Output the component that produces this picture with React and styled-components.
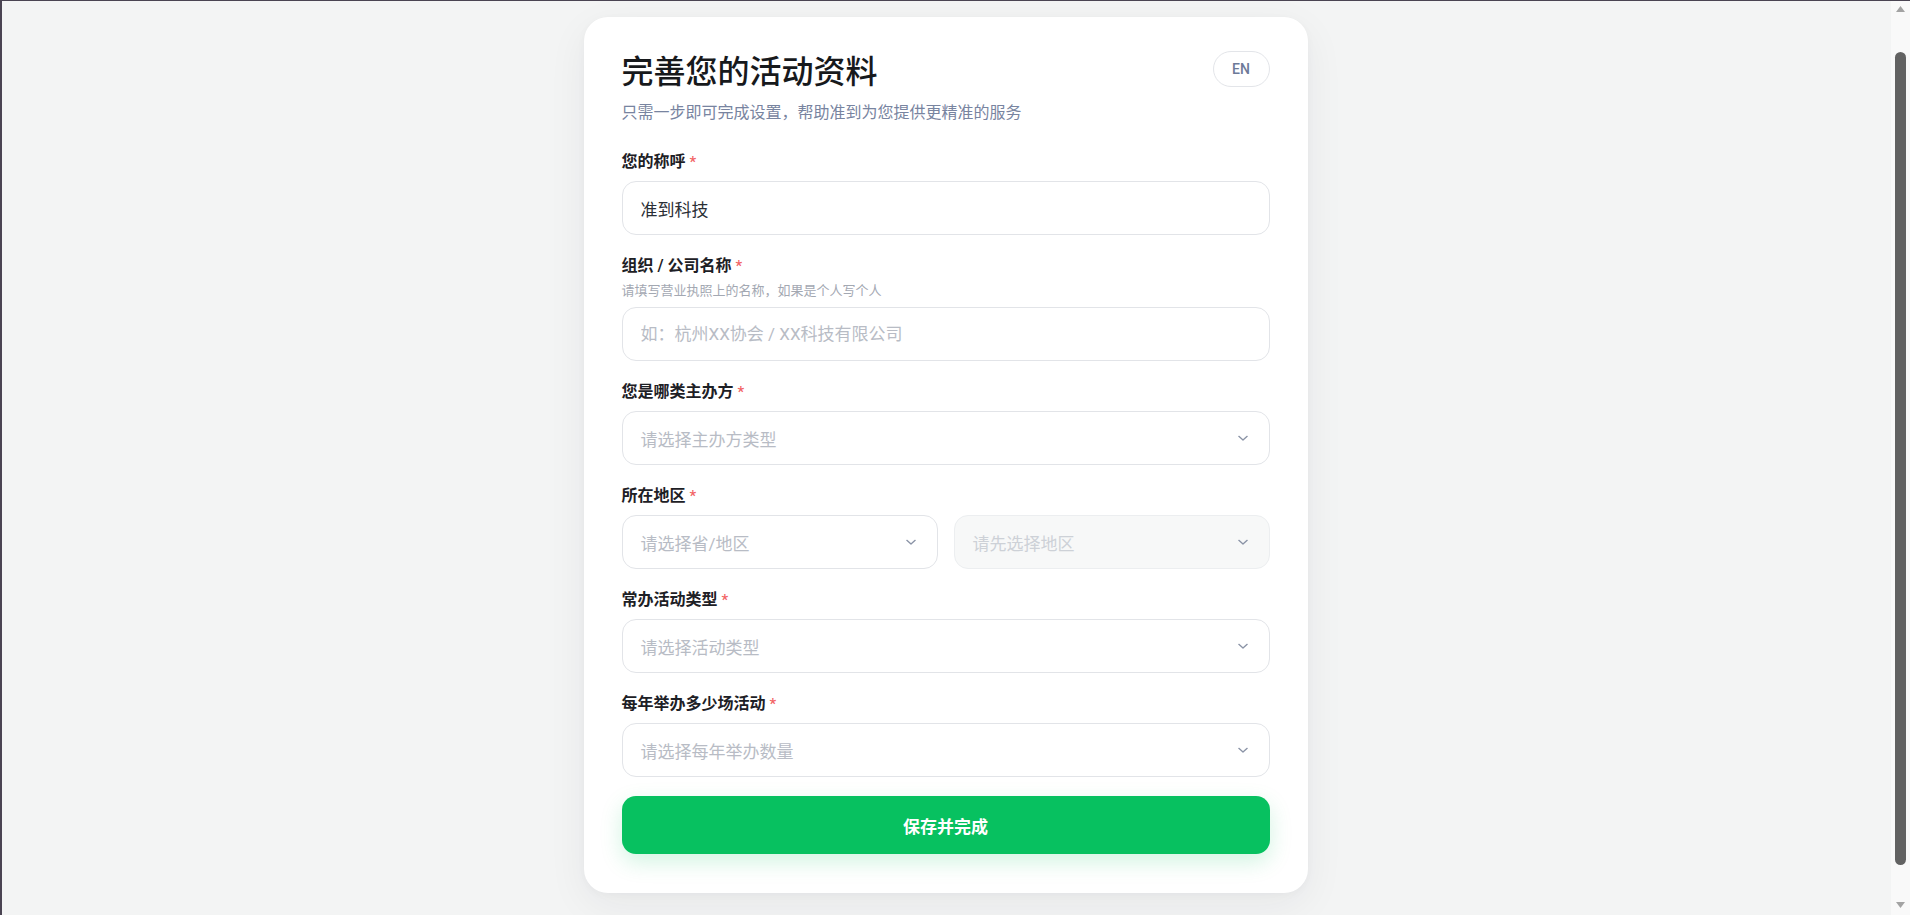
import React, { useLayoutEffect } from "react";
import styled, { createGlobalStyle } from "styled-components";

const GlobalStyle = createGlobalStyle`
  html, body {
    margin: 0;
    padding: 0;
    background: #f3f4f4;
    font-family: Roboto, "Noto Sans CJK SC", "Noto Sans", sans-serif;
    -webkit-font-smoothing: antialiased;
  }
  * { box-sizing: border-box; }
`;

/* thin dark window edge along the top and left */
const WindowEdge = styled.div`
  position: fixed;
  inset: 0;
  pointer-events: none;
  border-top: 1px solid #4a4452;
  border-left: 2px solid #4a4452;
  z-index: 10;
`;

/* classic scrollbar strip on the right */
const ScrollTrack = styled.div`
  position: fixed;
  top: 1px;
  right: 0;
  bottom: 0;
  width: 19px;
  background: #f9f9f9;
  z-index: 9;
`;

const ScrollThumb = styled.div`
  position: absolute;
  left: 4px;
  width: 11px;
  top: 51px;
  height: 813px;
  border-radius: 6px;
  background: #626262;
`;

const ScrollArrow = styled.svg`
  position: absolute;
  left: 5px;
  ${(p) => (p.$down ? "bottom: 7px;" : "top: 5px;")}
`;

const Page = styled.main`
  min-height: 100vh;
  display: flex;
  justify-content: center;
  align-items: flex-start;
  padding: 57px 35px 57px 16px;
`;

const Card = styled.section`
  width: 724px;
  background: #ffffff;
  border-radius: 24px;
  padding: 34px 38px 39px;
  box-shadow: 0 12px 40px rgba(30, 40, 50, 0.06), 0 2px 8px rgba(30, 40, 50, 0.03);
`;

const Header = styled.header`
  display: flex;
  justify-content: space-between;
  align-items: flex-start;
`;

const Title = styled.h1`
  margin: 2px 0 0;
  font-size: 32px;
  line-height: 38px;
  font-weight: 500;
  color: #17191c;
`;

const Subtitle = styled.p`
  margin: 10px 0 0;
  font-size: 16px;
  line-height: 24px;
  color: #7884a0;
`;

const LangButton = styled.button`
  width: 57px;
  height: 36px;
  border: 1px solid #e3e5e9;
  border-radius: 18px;
  background: #fff;
  font-family: inherit;
  font-size: 14px;
  font-weight: 500;
  color: #6d7a98;
  cursor: pointer;
  padding: 0;
`;

const Form = styled.form`
  margin-top: 27px;
  display: flex;
  flex-direction: column;
  gap: 21px;
`;

const Field = styled.div`
  display: flex;
  flex-direction: column;
`;

const Label = styled.label`
  font-size: 16px;
  line-height: 20px;
  font-weight: 600;
  color: #1d2025;
  margin-bottom: ${(p) => (p.$hasHint ? "6px" : "9px")};
`;

const Star = styled.span`
  color: #f26464;
  font-size: 15px;
  font-weight: 500;
  margin-left: 4px;
`;

const Hint = styled.div`
  font-size: 13px;
  line-height: 18px;
  color: #a3a8b2;
  margin-bottom: 7px;
`;

const TextInput = styled.input`
  height: 54px;
  width: 100%;
  border: 1px solid #e2e4e8;
  border-radius: 14px;
  padding: 0 18px;
  font-family: inherit;
  font-size: 17px;
  color: #2a2e35;
  background: #fff;
  outline: none;

  &::placeholder {
    color: #b8bcc5;
  }
`;

const Select = styled.div`
  height: 54px;
  display: flex;
  align-items: center;
  justify-content: space-between;
  border: 1px solid ${(p) => (p.$disabled ? "#eceef0" : "#e2e4e8")};
  border-radius: 14px;
  padding: 0 16px 0 18px;
  background: ${(p) => (p.$disabled ? "#f7f8f8" : "#fff")};
  font-size: 17px;
  color: ${(p) => (p.$disabled ? "#cdd1d7" : "#b8bcc5")};
  cursor: ${(p) => (p.$disabled ? "not-allowed" : "pointer")};
`;

const Row = styled.div`
  display: grid;
  grid-template-columns: 1fr 1fr;
  gap: 16px;
`;

const Submit = styled.button`
  margin-top: 19px;
  width: 100%;
  height: 58px;
  border: none;
  border-radius: 14px;
  background: #07c160;
  color: #fff;
  font-family: inherit;
  font-size: 17px;
  font-weight: 600;
  cursor: pointer;
  box-shadow: 0 8px 22px rgba(7, 193, 96, 0.18);
`;

const Chevron = () => (
  <svg width="20" height="20" viewBox="0 0 24 24" fill="none" stroke="#8a93a6" strokeWidth="1.6" strokeLinecap="round" strokeLinejoin="round">
    <path d="m7 10 5 4.5 5-4.5" />
  </svg>
);

const SelectBox = ({ placeholder, disabled }) => (
  <Select $disabled={disabled}>
    <span>{placeholder}</span>
    <Chevron />
  </Select>
);

const Req = () => <Star>*</Star>;

export default function App() {
  useLayoutEffect(() => {
    window.scrollTo(0, 40);
  }, []);

  return (
    <>
      <GlobalStyle />
      <WindowEdge />
      <ScrollTrack>
        <ScrollArrow width="9" height="6" viewBox="0 0 9 6">
          <path d="M0 6 4.5 0 9 6z" fill="#a3a3a3" />
        </ScrollArrow>
        <ScrollThumb />
        <ScrollArrow $down width="9" height="6" viewBox="0 0 9 6">
          <path d="M0 0h9L4.5 6z" fill="#a3a3a3" />
        </ScrollArrow>
      </ScrollTrack>
      <Page>
        <Card>
          <Header>
            <div>
              <Title>完善您的活动资料</Title>
              <Subtitle>只需一步即可完成设置，帮助准到为您提供更精准的服务</Subtitle>
            </div>
            <LangButton type="button">EN</LangButton>
          </Header>

          <Form onSubmit={(e) => e.preventDefault()}>
            <Field>
              <Label>您的称呼<Req /></Label>
              <TextInput defaultValue="准到科技" />
            </Field>

            <Field>
              <Label $hasHint>组织 / 公司名称<Req /></Label>
              <Hint>请填写营业执照上的名称，如果是个人写个人</Hint>
              <TextInput placeholder="如：杭州XX协会 / XX科技有限公司" />
            </Field>

            <Field>
              <Label>您是哪类主办方<Req /></Label>
              <SelectBox placeholder="请选择主办方类型" />
            </Field>

            <Field>
              <Label>所在地区<Req /></Label>
              <Row>
                <SelectBox placeholder="请选择省/地区" />
                <SelectBox placeholder="请先选择地区" disabled />
              </Row>
            </Field>

            <Field>
              <Label>常办活动类型<Req /></Label>
              <SelectBox placeholder="请选择活动类型" />
            </Field>

            <Field>
              <Label>每年举办多少场活动<Req /></Label>
              <SelectBox placeholder="请选择每年举办数量" />
            </Field>
          </Form>

          <Submit type="button">保存并完成</Submit>
        </Card>
      </Page>
    </>
  );
}
